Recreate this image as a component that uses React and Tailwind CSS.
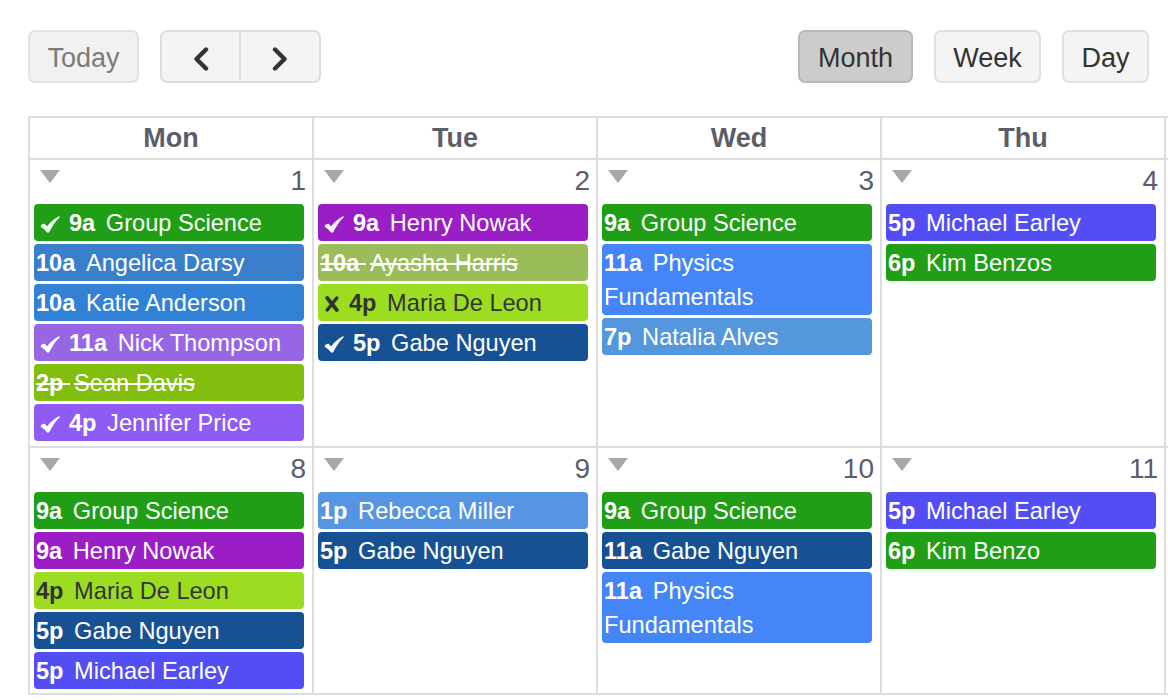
import React from "react";

const days = [
  {
    n: 1,
    ev: [
      { m: "check", t: "9a", title: "Group Science", c: "bg-[#1f9e16]" },
      { t: "10a", title: "Angelica Darsy", c: "bg-[#3a7fcb]" },
      { t: "10a", title: "Katie Anderson", c: "bg-[#3182d6]" },
      { m: "check", t: "11a", title: "Nick Thompson", c: "bg-[#9666e5]" },
      { strike: true, t: "2p", title: "Sean Davis", c: "bg-[#82be0d]" },
      { m: "check", t: "4p", title: "Jennifer Price", c: "bg-[#8e5cf4]" },
    ],
  },
  {
    n: 2,
    ev: [
      { m: "check", t: "9a", title: "Henry Nowak", c: "bg-[#9a1dc5]" },
      { strike: true, t: "10a", title: "Ayasha Harris", c: "bg-[#9bbd59]" },
      { m: "x", dark: true, t: "4p", title: "Maria De Leon", c: "bg-[#9cdd22]" },
      { m: "check", t: "5p", title: "Gabe Nguyen", c: "bg-[#165194]" },
    ],
  },
  {
    n: 3,
    ev: [
      { t: "9a", title: "Group Science", c: "bg-[#1f9e16]" },
      { t: "11a", title: "Physics Fundamentals", c: "bg-[#4486f8]" },
      { t: "7p", title: "Natalia Alves", c: "bg-[#5497dc]" },
    ],
  },
  {
    n: 4,
    ev: [
      { t: "5p", title: "Michael Earley", c: "bg-[#524ef4]" },
      { t: "6p", title: "Kim Benzos", c: "bg-[#1f9e16]" },
    ],
  },
  { n: null, ev: [] },
  { n: null, ev: [] },
  { n: null, ev: [] },
];

const days2 = [
  {
    n: 8,
    ev: [
      { t: "9a", title: "Group Science", c: "bg-[#1f9e16]" },
      { t: "9a", title: "Henry Nowak", c: "bg-[#9a1dc5]" },
      { dark: true, t: "4p", title: "Maria De Leon", c: "bg-[#9cdd22]" },
      { t: "5p", title: "Gabe Nguyen", c: "bg-[#165194]" },
      { t: "5p", title: "Michael Earley", c: "bg-[#524ef4]" },
    ],
  },
  {
    n: 9,
    ev: [
      { t: "1p", title: "Rebecca Miller", c: "bg-[#5595e3]" },
      { t: "5p", title: "Gabe Nguyen", c: "bg-[#165194]" },
    ],
  },
  {
    n: 10,
    ev: [
      { t: "9a", title: "Group Science", c: "bg-[#1f9e16]" },
      { t: "11a", title: "Gabe Nguyen", c: "bg-[#165194]" },
      { t: "11a", title: "Physics Fundamentals", c: "bg-[#4486f8]" },
    ],
  },
  {
    n: 11,
    ev: [
      { t: "5p", title: "Michael Earley", c: "bg-[#524ef4]" },
      { t: "6p", title: "Kim Benzo", c: "bg-[#1f9e16]" },
    ],
  },
  { n: null, ev: [] },
  { n: null, ev: [] },
  { n: null, ev: [] },
];

function CheckIcon() {
  return (
    <svg
      className="inline-block ml-[4px] mr-[9px]"
      width="20"
      height="17"
      viewBox="0 0 20 17"
    >
      <path
        d="M0.4 10.4 C1.4 8.4 3.4 7 4.9 8 C5.7 8.6 6.3 9.6 7 10.5 C10 6.4 14 2.7 18.5 0.4 C19.4 0 20.1 0.6 19.5 1.4 C15.6 5.3 12 10.3 9.4 15.8 C8.9 16.9 7.5 17.1 6.7 16.1 C5 13.9 2.9 11.7 0.4 10.4 Z"
        fill="currentColor"
      />
    </svg>
  );
}

function XIcon() {
  return (
    <svg
      className="inline-block ml-[5px] mr-[10px]"
      width="14"
      height="16"
      viewBox="0 0 14 16"
    >
      <path d="M2.2 2 L11.8 14" stroke="currentColor" strokeWidth="3.8" strokeLinecap="round" />
      <path d="M11.8 2 L2.2 14" stroke="currentColor" strokeWidth="3.4" strokeLinecap="round" />
    </svg>
  );
}

function Event({ e }) {
  return (
    <div
      className={`${e.c} ${e.dark ? "text-[#333333]" : "text-white"} ml-[4px] mr-[8px] mt-[3px] rounded-[4px] pl-[2px] pr-[2px] py-[1.5px] text-[23.6px] leading-[34px] ${
        e.strike ? "line-through" : ""
      }`}
    >
      {e.m === "check" && <CheckIcon />}
      {e.m === "x" && <XIcon />}
      <span className="font-bold">{e.t}</span>{" "}
      <span className="ml-[4px]">{e.title}</span>
    </div>
  );
}

function DayCell({ d, h }) {
  return (
    <div className={`${h} border-r-2 border-b-2 border-[#dddddd]`}>
      {d.n !== null && (
        <div className="flex justify-between h-[41px]">
          <div className="ml-[10px] mt-[10px] w-0 h-0 border-l-[10px] border-r-[10px] border-t-[13px] border-l-transparent border-r-transparent border-t-[#a8a8a8]" />
          <div className="mr-[6px] mt-[7px] text-[28px] leading-[28px] text-[#5b5e6a]">{d.n}</div>
        </div>
      )}
      {d.ev.map((e, i) => (
        <Event key={i} e={e} />
      ))}
    </div>
  );
}

function Chevron({ dir }) {
  return (
    <svg className="mt-[4px]" width="18" height="24" viewBox="0 0 18 24" fill="none">
      {dir === "left" ? (
        <path d="M14 2.5 L4.5 12 L14 21.5" stroke="#333333" strokeWidth="4.4" strokeLinecap="round" strokeLinejoin="round" />
      ) : (
        <path d="M4 2.5 L13.5 12 L4 21.5" stroke="#333333" strokeWidth="4.4" strokeLinecap="round" strokeLinejoin="round" />
      )}
    </svg>
  );
}

export default function App() {
  const headers = ["Mon", "Tue", "Wed", "Thu", "", "", ""];
  return (
    <div
      className="w-[1168px] h-[700px] overflow-hidden bg-white"
      style={{ fontFamily: '"Liberation Sans", Arial, sans-serif' }}
    >
      <div className="flex justify-between items-start pt-[30px] pl-[28px] w-[1149px]">
        <div className="flex gap-[21px]">
          <div className="w-[111px] h-[53px] pt-[3px] rounded-[7px] border-2 border-[#e2e2e2] bg-[#f1f1f1] flex items-center justify-center text-[27px] text-[#7b7b7b]">
            Today
          </div>
          <div className="flex h-[53px] rounded-[7px] border-2 border-[#dddddd] bg-[#f4f4f4]">
            <div className="w-[79px] flex items-center justify-center border-r-2 border-[#dddddd]">
              <Chevron dir="left" />
            </div>
            <div className="w-[78px] flex items-center justify-center">
              <Chevron dir="right" />
            </div>
          </div>
        </div>
        <div className="flex gap-[21px]">
          <div className="w-[115px] h-[53px] pt-[3px] rounded-[7px] border-2 border-[#b7b7b7] bg-[#cccccc] flex items-center justify-center text-[27px] text-[#333333]">
            Month
          </div>
          <div className="w-[107px] h-[53px] pt-[3px] rounded-[7px] border-2 border-[#e0e0e0] bg-[#f4f4f4] flex items-center justify-center text-[27px] text-[#333333]">
            Week
          </div>
          <div className="w-[87px] h-[53px] pt-[3px] rounded-[7px] border-2 border-[#e0e0e0] bg-[#f4f4f4] flex items-center justify-center text-[27px] text-[#333333]">
            Day
          </div>
        </div>
      </div>

      <div className="mt-[33px] ml-[28px] w-[1990px] border-l-2 border-t-2 border-[#dddddd] grid grid-cols-[repeat(7,284px)]">
        {headers.map((h, i) => (
          <div
            key={i}
            className="h-[42px] border-r-2 border-b-2 border-[#dddddd] flex items-center justify-center text-[27px] font-bold text-[#5b5e6a]"
          >
            {h}
          </div>
        ))}
        {days.map((d, i) => (
          <DayCell key={"a" + i} d={d} h="h-[288px]" />
        ))}
        {days2.map((d, i) => (
          <DayCell key={"b" + i} d={d} h="h-[247px]" />
        ))}
      </div>
    </div>
  );
}
